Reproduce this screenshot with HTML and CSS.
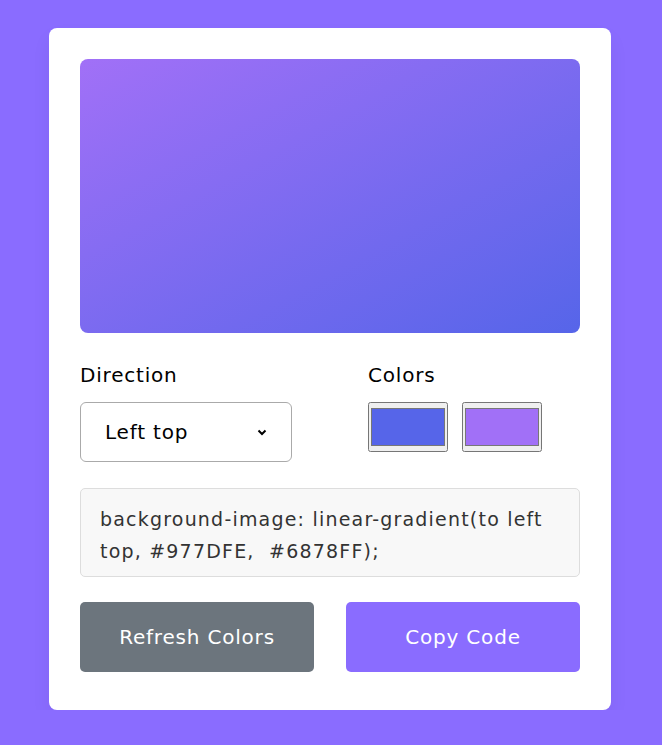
FILE: index.html
```html
<!DOCTYPE html>
<html>
<head>
<meta charset="utf-8">
<link rel="stylesheet" href="styles.css">
</head>
<body>
<div class="card">
  <div class="preview"></div>
  <div class="options">
    <div class="col">
      <p class="label">Direction</p>
      <div class="select-wrap">
        <select class="select">
          <option>Left top</option>
        </select>
        <svg class="chev" width="10" height="7" viewBox="0 0 10 7"><path d="M1.5 1.5 L5 5 L8.5 1.5" fill="none" stroke="#000" stroke-width="2"/></svg>
      </div>
    </div>
    <div class="col">
      <p class="label">Colors</p>
      <div class="swatches">
        <input type="color" class="swatch" value="#5665e9">
        <input type="color" class="swatch" value="#a170f7">
      </div>
    </div>
  </div>
  <textarea class="code" readonly>background-image: linear-gradient(to left top, #977DFE,  #6878FF);</textarea>
  <div class="buttons">
    <button class="btn refresh">Refresh Colors</button>
    <button class="btn copy">Copy Code</button>
  </div>
</div>
</body>
</html>
```
FILE: styles.css
```css
* { box-sizing: border-box; }
body {
  margin: 0;
  background: #8a6cff;
  font-family: "DejaVu Sans", sans-serif;
  letter-spacing: 0.8px;
  padding-top: 28px;
}
.card {
  width: 562px;
  margin-left: 49px;
  background: #fff;
  border-radius: 8px;
  padding: 31px 31px 38px;
  box-shadow: 0 10px 20px rgba(0,0,0,0.05);
}
.preview {
  height: 274px;
  border-radius: 8px;
  background: linear-gradient(to left top, #5665e9, #a170f7);
}
.options {
  display: grid;
  grid-template-columns: 288px 1fr;
  margin-top: 28px;
}
.label {
  margin: 0 0 13px;
  font-size: 20px;
  line-height: 28px;
  color: #000;
}
.select-wrap { position: relative; width: 212px; }
.select {
  appearance: none;
  -webkit-appearance: none;
  width: 212px;
  height: 60px;
  border: 1px solid #aaa;
  border-radius: 6px;
  background: #fff;
  padding: 0 0 0 24px;
  font-family: inherit;
  letter-spacing: inherit;
  font-size: 20px;
  color: #000;
}
.chev { position: absolute; left: 177px; top: 27px; }
.swatches { display: flex; gap: 14px; }
.swatch {
  width: 80px;
  height: 50px;
  padding: 1px 0;
}
.code {
  display: block;
  width: 100%;
  height: 89px;
  margin-top: 26px;
  background: #f8f8f8;
  border: 1px solid #ddd;
  border-radius: 5px;
  padding: 14px 19px;
  font-family: inherit;
  letter-spacing: 1.2px;
  font-size: 19px;
  line-height: 32px;
  color: #333;
  resize: none;
  overflow: hidden;
}
.buttons {
  display: flex;
  justify-content: space-between;
  margin-top: 25px;
}
.btn {
  width: 234px;
  height: 70px;
  border: none;
  border-radius: 5px;
  color: #fff;
  font-family: inherit;
  letter-spacing: inherit;
  font-size: 20px;
}
.refresh { background: #6c757d; }
.copy { background: #8a6cff; }
```
